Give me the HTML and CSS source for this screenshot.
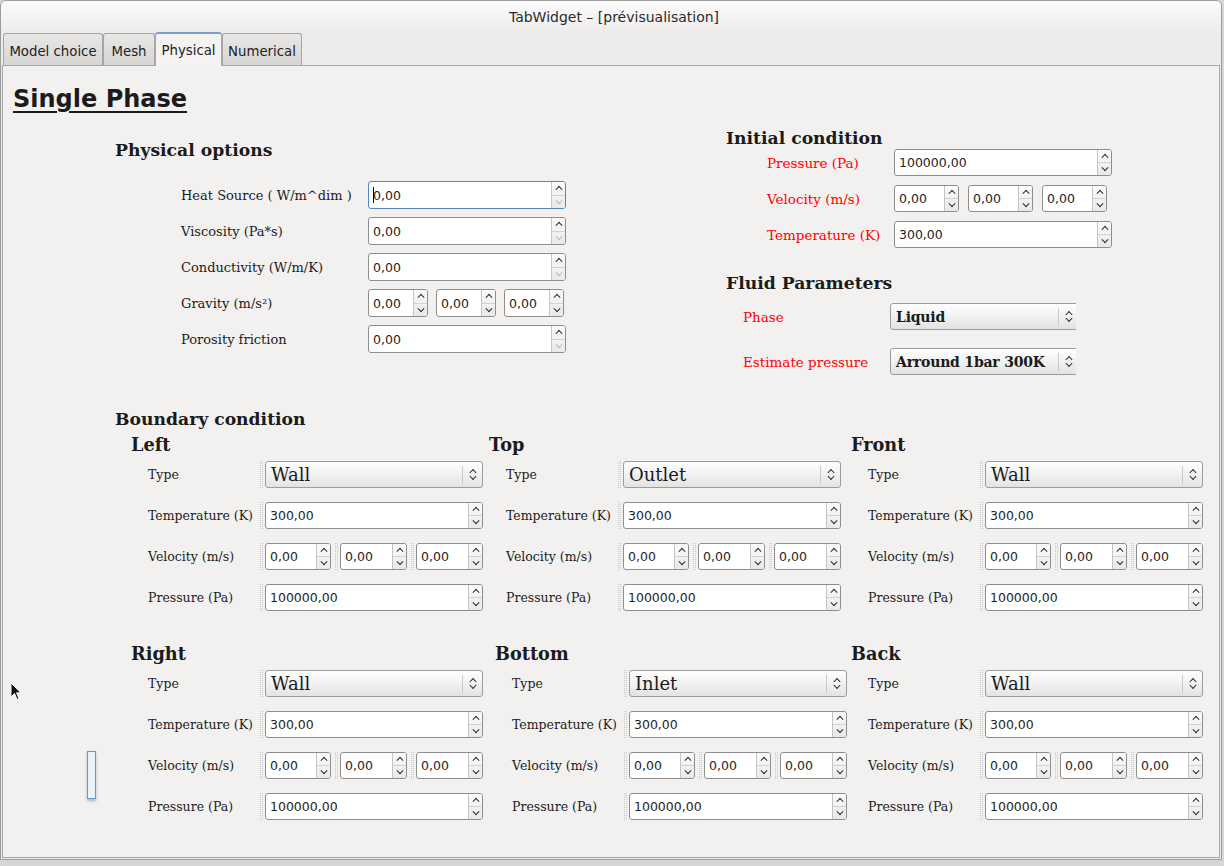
FILE: index.html
```html
<!DOCTYPE html>
<html>
<head>
<meta charset="utf-8">
<title>TabWidget</title>
<link rel="stylesheet" href="styles.css">
</head>
<body>
<div class="window">
  <div class="titlebar">TabWidget – [prévisualisation]</div>
  <div class="tabs">
    <div class="tab t1">Model choice</div>
    <div class="tab t2">Mesh</div>
    <div class="tab t3 sel">Physical</div>
    <div class="tab t4">Numerical</div>
  </div>
  <div class="pane">
    <h1 class="title">Single Phase</h1>
    <div class="top">
      <div class="phys">
        <div class="sechead">Physical options</div>
        <div class="prows">
          <div class="prow"><span class="lbl">Heat Source ( W/m^dim )</span>
            <div class="spin focus"><span class="val"><i class="caret"></i>0,00</span><span class="btns"><span class="up"></span><span class="dn dis"></span></span></div></div>
          <div class="prow"><span class="lbl">Viscosity (Pa*s)</span>
            <div class="spin"><span class="val">0,00</span><span class="btns"><span class="up"></span><span class="dn dis"></span></span></div></div>
          <div class="prow"><span class="lbl">Conductivity (W/m/K)</span>
            <div class="spin"><span class="val">0,00</span><span class="btns"><span class="up"></span><span class="dn dis"></span></span></div></div>
          <div class="prow"><span class="lbl">Gravity (m/s²)</span>
            <div class="trio grav">
              <div class="spin"><span class="val">0,00</span><span class="btns"><span class="up"></span><span class="dn"></span></span></div>
              <div class="spin"><span class="val">0,00</span><span class="btns"><span class="up"></span><span class="dn"></span></span></div>
              <div class="spin"><span class="val">0,00</span><span class="btns"><span class="up"></span><span class="dn"></span></span></div>
            </div></div>
          <div class="prow"><span class="lbl">Porosity friction</span>
            <div class="spin"><span class="val">0,00</span><span class="btns"><span class="up"></span><span class="dn dis"></span></span></div></div>
        </div>
      </div>
      <div class="init">
        <div class="sechead">Initial condition</div>
        <div class="irows">
          <div class="irow"><span class="lbl red">Pressure (Pa)</span>
            <div class="spin"><span class="val">100000,00</span><span class="btns"><span class="up"></span><span class="dn"></span></span></div></div>
          <div class="irow"><span class="lbl red">Velocity (m/s)</span>
            <div class="trio ivel">
              <div class="spin"><span class="val">0,00</span><span class="btns"><span class="up"></span><span class="dn"></span></span></div>
              <div class="spin"><span class="val">0,00</span><span class="btns"><span class="up"></span><span class="dn"></span></span></div>
              <div class="spin"><span class="val">0,00</span><span class="btns"><span class="up"></span><span class="dn"></span></span></div>
            </div></div>
          <div class="irow"><span class="lbl red">Temperature (K)</span>
            <div class="spin"><span class="val">300,00</span><span class="btns"><span class="up"></span><span class="dn"></span></span></div></div>
        </div>
        <div class="sechead fluidhead">Fluid Parameters</div>
        <div class="frows">
          <div class="frow"><span class="lbl red">Phase</span>
            <div class="clip"><div class="combo bold"><span class="ctext">Liquid</span><span class="csep"></span><span class="carr"></span></div></div></div>
          <div class="frow"><span class="lbl red">Estimate pressure</span>
            <div class="clip"><div class="combo bold"><span class="ctext">Arround 1bar 300K</span><span class="csep"></span><span class="carr"></span></div></div></div>
        </div>
      </div>
    </div>

    <div class="bound">
      <div class="sechead">Boundary condition</div>
      <div class="grid g1">
        <div class="group">
          <div class="ghead">Left</div>
          <div class="brows">
            <div class="brow"><span class="lbl">Type</span><i class="grip"></i><div class="combo"><span class="ctext">Wall</span><span class="csep"></span><span class="carr"></span></div></div>
            <div class="brow"><span class="lbl">Temperature (K)</span><i class="grip"></i><div class="spin"><span class="val">300,00</span><span class="btns"><span class="up"></span><span class="dn"></span></span></div></div>
            <div class="brow"><span class="lbl">Velocity (m/s)</span><div class="bvel"><i class="grip"></i><div class="spin s1"><span class="val">0,00</span><span class="btns"><span class="up"></span><span class="dn"></span></span></div><i class="grip"></i><div class="spin s2"><span class="val">0,00</span><span class="btns"><span class="up"></span><span class="dn"></span></span></div><i class="grip"></i><div class="spin s2"><span class="val">0,00</span><span class="btns"><span class="up"></span><span class="dn"></span></span></div></div></div>
            <div class="brow"><span class="lbl">Pressure (Pa)</span><i class="grip"></i><div class="spin"><span class="val">100000,00</span><span class="btns"><span class="up"></span><span class="dn"></span></span></div></div>
          </div>
        </div>
        <div class="group">
          <div class="ghead">Top</div>
          <div class="brows">
            <div class="brow"><span class="lbl">Type</span><i class="grip"></i><div class="combo"><span class="ctext">Outlet</span><span class="csep"></span><span class="carr"></span></div></div>
            <div class="brow"><span class="lbl">Temperature (K)</span><i class="grip"></i><div class="spin"><span class="val">300,00</span><span class="btns"><span class="up"></span><span class="dn"></span></span></div></div>
            <div class="brow"><span class="lbl">Velocity (m/s)</span><div class="bvel"><i class="grip"></i><div class="spin s1"><span class="val">0,00</span><span class="btns"><span class="up"></span><span class="dn"></span></span></div><i class="grip"></i><div class="spin s2"><span class="val">0,00</span><span class="btns"><span class="up"></span><span class="dn"></span></span></div><i class="grip"></i><div class="spin s2"><span class="val">0,00</span><span class="btns"><span class="up"></span><span class="dn"></span></span></div></div></div>
            <div class="brow"><span class="lbl">Pressure (Pa)</span><i class="grip"></i><div class="spin"><span class="val">100000,00</span><span class="btns"><span class="up"></span><span class="dn"></span></span></div></div>
          </div>
        </div>
        <div class="group">
          <div class="ghead">Front</div>
          <div class="brows">
            <div class="brow"><span class="lbl">Type</span><i class="grip"></i><div class="combo"><span class="ctext">Wall</span><span class="csep"></span><span class="carr"></span></div></div>
            <div class="brow"><span class="lbl">Temperature (K)</span><i class="grip"></i><div class="spin"><span class="val">300,00</span><span class="btns"><span class="up"></span><span class="dn"></span></span></div></div>
            <div class="brow"><span class="lbl">Velocity (m/s)</span><div class="bvel"><i class="grip"></i><div class="spin s1"><span class="val">0,00</span><span class="btns"><span class="up"></span><span class="dn"></span></span></div><i class="grip"></i><div class="spin s2"><span class="val">0,00</span><span class="btns"><span class="up"></span><span class="dn"></span></span></div><i class="grip"></i><div class="spin s2"><span class="val">0,00</span><span class="btns"><span class="up"></span><span class="dn"></span></span></div></div></div>
            <div class="brow"><span class="lbl">Pressure (Pa)</span><i class="grip"></i><div class="spin"><span class="val">100000,00</span><span class="btns"><span class="up"></span><span class="dn"></span></span></div></div>
          </div>
        </div>
      </div>

      <div class="grid g2">
        <div class="group">
          <div class="ghead">Right</div>
          <div class="brows">
            <div class="brow"><span class="lbl">Type</span><i class="grip"></i><div class="combo"><span class="ctext">Wall</span><span class="csep"></span><span class="carr"></span></div></div>
            <div class="brow"><span class="lbl">Temperature (K)</span><i class="grip"></i><div class="spin"><span class="val">300,00</span><span class="btns"><span class="up"></span><span class="dn"></span></span></div></div>
            <div class="brow"><span class="lbl">Velocity (m/s)</span><div class="bvel"><i class="grip"></i><div class="spin s1"><span class="val">0,00</span><span class="btns"><span class="up"></span><span class="dn"></span></span></div><i class="grip"></i><div class="spin s2"><span class="val">0,00</span><span class="btns"><span class="up"></span><span class="dn"></span></span></div><i class="grip"></i><div class="spin s2"><span class="val">0,00</span><span class="btns"><span class="up"></span><span class="dn"></span></span></div></div></div>
            <div class="brow"><span class="lbl">Pressure (Pa)</span><i class="grip"></i><div class="spin"><span class="val">100000,00</span><span class="btns"><span class="up"></span><span class="dn"></span></span></div></div>
          </div>
        </div>
        <div class="group">
          <div class="ghead">Bottom</div>
          <div class="brows">
            <div class="brow"><span class="lbl">Type</span><i class="grip"></i><div class="combo"><span class="ctext">Inlet</span><span class="csep"></span><span class="carr"></span></div></div>
            <div class="brow"><span class="lbl">Temperature (K)</span><i class="grip"></i><div class="spin"><span class="val">300,00</span><span class="btns"><span class="up"></span><span class="dn"></span></span></div></div>
            <div class="brow"><span class="lbl">Velocity (m/s)</span><div class="bvel"><i class="grip"></i><div class="spin s1"><span class="val">0,00</span><span class="btns"><span class="up"></span><span class="dn"></span></span></div><i class="grip"></i><div class="spin s2"><span class="val">0,00</span><span class="btns"><span class="up"></span><span class="dn"></span></span></div><i class="grip"></i><div class="spin s2"><span class="val">0,00</span><span class="btns"><span class="up"></span><span class="dn"></span></span></div></div></div>
            <div class="brow"><span class="lbl">Pressure (Pa)</span><i class="grip"></i><div class="spin"><span class="val">100000,00</span><span class="btns"><span class="up"></span><span class="dn"></span></span></div></div>
          </div>
        </div>
        <div class="group">
          <div class="ghead">Back</div>
          <div class="brows">
            <div class="brow"><span class="lbl">Type</span><i class="grip"></i><div class="combo"><span class="ctext">Wall</span><span class="csep"></span><span class="carr"></span></div></div>
            <div class="brow"><span class="lbl">Temperature (K)</span><i class="grip"></i><div class="spin"><span class="val">300,00</span><span class="btns"><span class="up"></span><span class="dn"></span></span></div></div>
            <div class="brow"><span class="lbl">Velocity (m/s)</span><div class="bvel"><i class="grip"></i><div class="spin s1"><span class="val">0,00</span><span class="btns"><span class="up"></span><span class="dn"></span></span></div><i class="grip"></i><div class="spin s2"><span class="val">0,00</span><span class="btns"><span class="up"></span><span class="dn"></span></span></div><i class="grip"></i><div class="spin s2"><span class="val">0,00</span><span class="btns"><span class="up"></span><span class="dn"></span></span></div></div></div>
            <div class="brow"><span class="lbl">Pressure (Pa)</span><i class="grip"></i><div class="spin"><span class="val">100000,00</span><span class="btns"><span class="up"></span><span class="dn"></span></span></div></div>
          </div>
        </div>
      </div>
    </div>

    <div class="splitter"></div>
  </div>
  <svg class="cursor" width="12" height="19" viewBox="0 0 12 19"><path d="M1 1 L1 15 L4.5 11.5 L7 17.5 L9 16.6 L6.6 10.8 L11 10.8 Z" fill="#111" stroke="#fff" stroke-width="1"/></svg>
</div>
</body>
</html>
```

FILE: styles.css
```css
* { box-sizing: border-box; }
body {
  margin: 0;
  width: 1224px;
  height: 866px;
  overflow: hidden;
  background: #d6d6d6;
  font-family: "DejaVu Serif", serif;
  color: #1b1b1b;
}
.window {
  position: relative;
  width: 1222px;
  height: 860px;
  border: 1px solid #9b9b9b;
  border-radius: 6px 6px 0 0;
  background: #edeceb;
  display: flex;
  flex-direction: column;
  overflow: hidden;
}
.titlebar {
  height: 31px;
  flex: none;
  background: linear-gradient(#fbfbfb, #eeedec);
  font: 14px "DejaVu Sans", sans-serif;
  color: #2a2a2a;
  display: flex;
  align-items: center;
  justify-content: center;
  padding-left: 6px;
}
.tabs {
  height: 33px;
  flex: none;
  display: flex;
  align-items: flex-end;
  padding-left: 2px;
}
.tab {
  height: 32px;
  border: 1px solid #a6a6a6;
  border-bottom: none;
  border-radius: 3px 3px 0 0;
  background: linear-gradient(#e9e8e7, #d6d5d4);
  font: 13.3px "DejaVu Sans", sans-serif;
  color: #222;
  display: flex;
  align-items: center;
  justify-content: center;
  padding-top: 3px;
}
.t1 { width: 100px; }
.t2 { width: 52px; }
.t3 { width: 67px; }
.t4 { width: 80px; }
.tab.sel {
  height: 34px;
  margin-bottom: -1px;
  background: #f4f3f2;
  border-top: 2px solid #7c9fcb;
  padding-top: 0;
  padding-bottom: 0;
  position: relative;
  z-index: 1;
}
.pane {
  flex: 1;
  margin: 0 1px 1px;
  border: 1px solid #a7a7a7;
  background: #f2f1f0;
  position: relative;
}
.title {
  margin: 18px 0 0 10px;
  font: 700 24px "DejaVu Sans", sans-serif;
  line-height: 30px;
  height: 30px;
  text-decoration: underline;
  text-decoration-thickness: 2px;
  text-underline-offset: 4px;
  display: inline-block;
}
.top { display: flex; margin-top: 13px; }
.sechead {
  font: 700 17.2px "DejaVu Serif", serif;
  line-height: 22px;
  height: 22px;
  white-space: nowrap;
}
.lbl { white-space: nowrap; flex: none; }
.red { color: #f00; }

/* physical options */
.phys { margin-left: 112px; padding-top: 12px; width: 611px; flex: none; }
.prows { margin-top: 20px; padding-left: 66px; display: flex; flex-direction: column; gap: 8px; }
.prow { display: flex; align-items: center; height: 28px; }
.prow .lbl { width: 187px; font-size: 13px; }
.prow > .spin { width: 198px; height: 28px; }
.trio { display: flex; }
.grav { gap: 8px; }
.grav .spin { width: 60px; height: 28px; }

/* initial condition */
.irows { margin-top: 0; padding-left: 41px; display: flex; flex-direction: column; gap: 9px; }
.irow { display: flex; align-items: center; height: 27px; }
.irow .lbl { width: 127px; font-size: 13.5px; }
.irow > .spin { width: 218px; }
.ivel { gap: 9px; }
.ivel .spin { width: 65px; }
.fluidhead { margin-top: 24px; }
.frows { margin-top: 9px; padding-left: 17px; display: flex; flex-direction: column; gap: 18px; }
.frow { display: flex; align-items: center; height: 27px; }
.frow .lbl { width: 147px; font-size: 13.5px; }
.clip { width: 186px; height: 27px; overflow: hidden; }
.clip .combo { width: 189px; }

/* spin box */
.spin {
  display: flex;
  height: 27px;
  border: 1px solid #8e8e8e;
  border-radius: 3px;
  background: #fff;
  flex: none;
}
.spin.focus { border-color: #5685c2; }
.val {
  flex: 1;
  padding-left: 4px;
  font: 12.5px "DejaVu Sans", sans-serif;
  color: #1e1e1e;
  display: flex;
  align-items: center;
  white-space: nowrap;
  overflow: hidden;
}
.caret { display: inline-block; width: 1px; height: 16px; background: #000; margin-right: -1px; }
.btns {
  width: 14px;
  flex: none;
  border-left: 1px solid #c4c4c4;
  border-radius: 0 2px 2px 0;
  background: linear-gradient(#fbfbfb, #e9e9e9);
  display: flex;
  flex-direction: column;
}
.btns span { flex: 1; position: relative; }
.btns .up { border-bottom: 1px solid #d2d2d2; }
.up::before, .dn::before {
  content: "";
  position: absolute;
  left: 50%;
  top: 50%;
  width: 4px;
  height: 4px;
  border: 0 solid #2b2b2b;
}
.up::before {
  border-left-width: 1.4px;
  border-top-width: 1.4px;
  transform: translate(-50%, -25%) rotate(45deg);
}
.dn::before {
  border-right-width: 1.4px;
  border-bottom-width: 1.4px;
  transform: translate(-50%, -75%) rotate(45deg);
}
.dn.dis::before { border-color: #b9b9b9; }

/* combo */
.combo {
  display: flex;
  align-items: center;
  height: 27px;
  border: 1px solid #9c9c9c;
  border-radius: 3px;
  background: linear-gradient(#ffffff, #e3e3e3);
  flex: none;
}
.ctext {
  flex: 1;
  padding-left: 5px;
  font: 18px "DejaVu Serif", serif;
  white-space: nowrap;
  overflow: hidden;
}
.combo.bold .ctext { font: 700 14px "DejaVu Serif", serif; letter-spacing: -0.2px; }
.csep { width: 1px; height: 18px; background: #c9c9c9; flex: none; }
.carr { width: 19px; height: 100%; position: relative; flex: none; }
.carr::before, .carr::after {
  content: "";
  position: absolute;
  left: 50%;
  width: 4px;
  height: 4px;
  border: 0 solid #333;
}
.carr::before {
  top: 8px;
  border-left-width: 1.3px;
  border-top-width: 1.3px;
  transform: translateX(-50%) rotate(45deg);
}
.carr::after {
  top: 12px;
  border-right-width: 1.3px;
  border-bottom-width: 1.3px;
  transform: translateX(-50%) rotate(45deg);
}

/* boundary */
.bound { margin: 33px 0 0 112px; }
.grid { display: grid; margin-left: 16px; }
.g1 { grid-template-columns: 358px 362px 1fr; margin-top: 4px; }
.g2 { grid-template-columns: 364px 356px 1fr; margin-top: 32px; }
.ghead {
  font: 700 17.7px "DejaVu Serif", serif;
  line-height: 22px;
  height: 22px;
}
.brows { margin-top: 5px; padding-left: 17px; display: flex; flex-direction: column; gap: 14px; }
.brow { display: flex; align-items: center; height: 27px; }
.brow .lbl { width: 112px; font-size: 12.5px; }
.brow > .spin, .brow > .combo { width: 218px; }
.grip {
  display: block;
  flex: none;
  width: 3px;
  height: 27px;
  margin-right: 2px;
  background-image: conic-gradient(from 0deg at 1px 1px, transparent 75%, #c9c9c9 0);
  background-size: 2px 2px;
}
.bvel { display: flex; align-items: center; }
.bvel .spin + .grip { margin-left: 4px; }
.s1 { width: 66px; }
.s2 { width: 67px; }

/* overlays */
.splitter {
  position: absolute;
  left: 84px;
  top: 685px;
  width: 9px;
  height: 48px;
  background: #eaf3fc;
  border: 1px solid #5b9bd8;
  box-shadow: 0 2px 3px rgba(0,0,0,0.25);
}
.cursor { position: absolute; left: 9px; top: 681px; }
```
